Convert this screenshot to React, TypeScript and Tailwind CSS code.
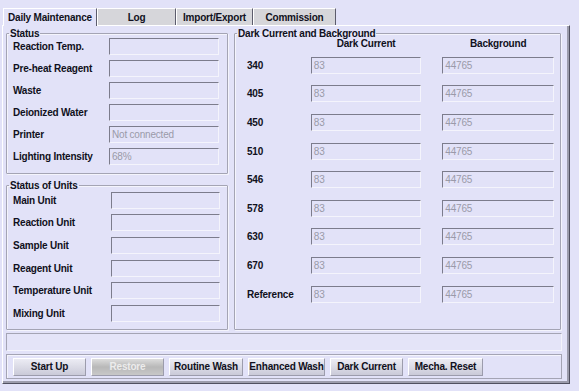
const statusRows: [string, string][] = [
  ["Reaction Temp.", ""],
  ["Pre-heat Reagent", ""],
  ["Waste", ""],
  ["Deionized Water", ""],
  ["Printer", "Not connected"],
  ["Lighting Intensity", "68%"],
];

const unitRows = ["Main Unit", "Reaction Unit", "Sample Unit", "Reagent Unit", "Temperature Unit", "Mixing Unit"];

const darkRows = ["340", "405", "450", "510", "546", "578", "630", "670", "Reference"];

const tabs = [
  { label: "Daily Maintenance", w: "w-[94px]", active: true },
  { label: "Log", w: "w-[79px]", active: false },
  { label: "Import/Export", w: "w-[77px]", active: false },
  { label: "Commission", w: "w-[83px]", active: false },
];

const buttons = [
  { label: "Start Up", w: "w-[73px]" },
  { label: "Restore", w: "w-[73px]", disabled: true },
  { label: "Routine Wash", w: "w-[74px]" },
  { label: "Enhanced Wash", w: "w-[77px]" },
  { label: "Dark Current", w: "w-[73px]" },
  { label: "Mecha. Reset", w: "w-[75px]" },
];

const Field = ({ value, w }: { value: string; w: string }) => (
  <div
    className={`${w} h-[17px] border border-t-[#7c7c8c] border-l-[#7c7c8c] border-r-[#f4f4fc] border-b-[#f4f4fc] bg-[#e2e2f8] px-[2px] text-[10px] leading-[15px] font-normal text-[#9a9aa8]`}
  >
    {value}
  </div>
);

const Group = ({ title, className, children }: { title: string; className: string; children: React.ReactNode }) => (
  <fieldset className={`${className} border border-[#a4a4b4] shadow-[inset_1px_1px_0_#f4f4fc,1px_1px_0_#f4f4fc] rounded-[1px] px-[6px] pb-0 m-0 min-w-0`}>
    <legend className="px-[1px] ml-[-4px] text-[10px] leading-[11px] font-bold text-[#101020]">{title}</legend>
    {children}
  </fieldset>
);

export default function App() {
  return (
    <div
      className="w-[579px] h-[391px] bg-[#e2e2f8] pt-[8px] pl-[2px] text-[#101020] tracking-[-0.2px] overflow-hidden"
      style={{ fontFamily: '"Liberation Sans", Arial, sans-serif' }}
    >
      <div className="flex h-[17px] pl-[1px]">
        {tabs.map((t) => (
          <div
            key={t.label}
            className={`${t.w} h-[17px] flex items-center justify-center text-[10px] font-bold border-t border-l border-t-white border-l-white border-r border-r-[#5c5c6c] ${
              t.active ? "bg-[#e2e2f8] relative z-10 h-[18px]" : "bg-[#d6d6da]"
            }`}
          >
            {t.label}
          </div>
        ))}
      </div>
      <div className="w-[568px] h-[359px] border border-t-white border-l-white border-r-[#505060] border-b-[#505060] shadow-[inset_-2px_-2px_0_#9c9cac] pl-[3px] pt-[2px]">
        <div className="flex gap-[6px]">
          <div className="flex flex-col gap-[6px] w-[222px]">
            <Group title="Status" className="h-[146px]">
              <div className="flex flex-col mt-[-4px]">
                {statusRows.map(([l, v]) => (
                  <div key={l} className="flex items-center h-[22px] text-[10px] font-bold">
                    <span className="w-[96px]">{l}</span>
                    <Field value={v} w="w-[110px]" />
                  </div>
                ))}
              </div>
            </Group>
            <Group title="Status of Units" className="h-[150px]">
              <div className="flex flex-col mt-[-2px]">
                {unitRows.map((l) => (
                  <div key={l} className="flex items-center h-[22.6px] text-[10px] font-bold">
                    <span className="w-[98px]">{l}</span>
                    <Field value="" w="w-[109px]" />
                  </div>
                ))}
              </div>
            </Group>
          </div>
          <Group title="Dark Current and Background" className="w-[327px] h-[302px]">
            <div className="flex text-[10px] font-bold h-[14px] items-start mt-[-3px]">
              <span className="w-[70px]" />
              <span className="w-[111px] text-center">Dark Current</span>
              <span className="w-[21px]" />
              <span className="w-[112px] text-center">Background</span>
            </div>
            <div className="flex flex-col pt-[1px]">
              {darkRows.map((l) => (
                <div key={l} className="flex items-center h-[28.6px] text-[10px] font-bold">
                  <span className="w-[70px] pl-[6px]">{l}</span>
                  <Field value="83" w="w-[111px]" />
                  <span className="w-[21px]" />
                  <Field value="44765" w="w-[112px]" />
                </div>
              ))}
            </div>
          </Group>
        </div>
        <div className="mt-[3px] w-[556px] h-[18px] border border-t-[#a4a4b4] border-l-[#a4a4b4] border-r-[#f4f4fc] border-b-[#f4f4fc] bg-[#e4e4f8]" />
        <div className="mt-[3px] w-[556px] h-[25px] border border-[#a4a4b4] shadow-[inset_1px_1px_0_#f4f4fc] flex items-center gap-[5px] pl-[6px]">
          {buttons.map((b) => (
            <div
              key={b.label}
              className={`${b.w} h-[18px] flex items-center justify-center text-[10px] font-bold border border-t-white border-l-white border-r-[#9c9cac] border-b-[#9c9cac] ${
                b.disabled
                  ? "bg-gradient-to-b from-[#dcdcdc] via-[#b8b8b8] to-[#c8c8c8] text-[#ececec]"
                  : "bg-gradient-to-b from-[#ececf4] to-[#cacad8] text-[#101020]"
              }`}
            >
              {b.label}
            </div>
          ))}
        </div>
      </div>
    </div>
  );
}
